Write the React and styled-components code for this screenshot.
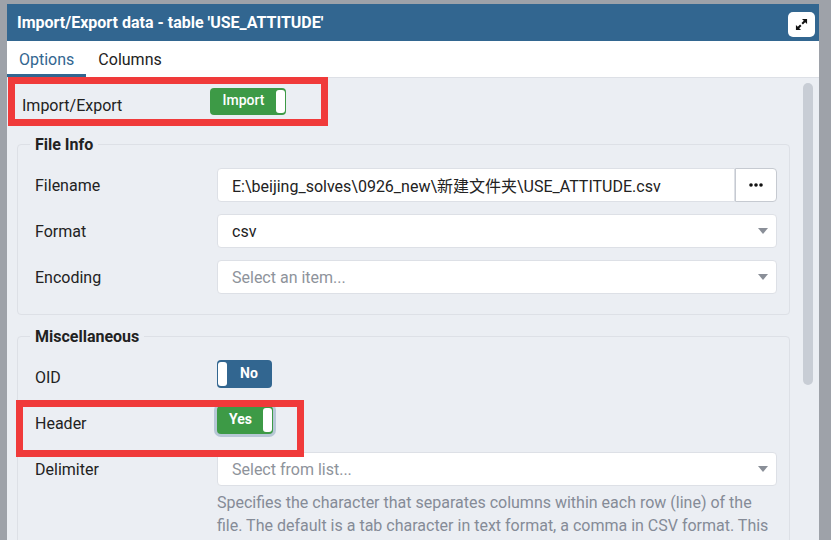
import styled, { createGlobalStyle } from "styled-components";

const GlobalStyle = createGlobalStyle`
  html, body {
    margin: 0;
    padding: 0;
    background: #9ea2a9;
  }
  body {
    font-family: Roboto, "Noto Sans CJK SC", sans-serif;
    color: #222;
  }
`;

const Page = styled.div`
  position: relative;
  width: 831px;
  height: 540px;
  overflow: hidden;
  box-sizing: border-box;
  padding: 4px 12px 0 7px;
  display: flex;
`;

const Dialog = styled.div`
  flex: 1;
  display: flex;
  flex-direction: column;
  background: #ebeef3;
`;

const TitleBar = styled.div`
  height: 37px;
  flex: none;
  background: #326690;
  display: flex;
  align-items: center;
  justify-content: space-between;
  padding: 0 4px 0 10px;
`;

const Title = styled.div`
  color: #fff;
  font-size: 16px;
  font-weight: 700;
`;

const ExpandButton = styled.div`
  width: 27px;
  height: 25px;
  margin-top: 4px;
  background: #fff;
  border-radius: 5px;
  display: flex;
  align-items: center;
  justify-content: center;
`;

const Tabs = styled.div`
  height: 36px;
  flex: none;
  background: #fff;
  border-bottom: 1px solid #dde0e6;
  display: flex;
`;

const Tab = styled.div`
  padding: 3px 12px 0;
  display: flex;
  align-items: center;
  font-size: 16px;
  color: ${(p) => (p.$active ? "#326690" : "#222")};
  border-bottom: 3px solid ${(p) => (p.$active ? "#326690" : "transparent")};
`;

const Body = styled.div`
  flex: 1;
  min-height: 0;
  display: flex;
`;

const Content = styled.div`
  flex: 1;
  padding: 10px 10px 0;
  overflow: hidden;
`;

const Scrollbar = styled.div`
  width: 19px;
  box-sizing: border-box;
  padding: 5px 6px 0 3px;
`;

const Thumb = styled.div`
  height: 302px;
  border-radius: 5px;
  background: #c8cdd5;
`;

const TopRow = styled.div`
  display: grid;
  grid-template-columns: 188px 1fr;
  align-items: start;
  padding-left: 5px;
`;

const Section = styled.fieldset`
  margin: ${(p) => p.$mt}px 0 0;
  border: 1px solid #dde0e6;
  border-radius: 4px;
  padding: 14px 12px 20px 17px;
  min-width: 0;
`;

const Legend = styled.legend`
  font-size: 16px;
  font-weight: 700;
  line-height: 19px;
  padding: 0 5px;
  margin-left: -5px;
`;

const Grid = styled.div`
  display: grid;
  grid-template-columns: 182px 1fr;
  row-gap: 12px;
  align-items: start;
`;

const Label = styled.div`
  height: 34px;
  display: flex;
  align-items: center;
  font-size: 16px;
`;

const Field = styled.div`
  display: flex;
  flex-direction: column;
`;

const InputGroup = styled.div`
  display: flex;
  height: 34px;
`;

const Box = styled.div`
  flex: 1;
  background: #fff;
  border: 1px solid #dde0e6;
  border-radius: ${(p) => (p.$joined ? "4px 0 0 4px" : "4px")};
  padding: 0 8px 0 14px;
  display: flex;
  align-items: center;
  justify-content: space-between;
  font-size: 16px;
  color: ${(p) => (p.$placeholder ? "#8e939b" : "#222")};
  white-space: nowrap;
`;

const Caret = styled.span`
  width: 0;
  height: 0;
  border-left: 5px solid transparent;
  border-right: 5px solid transparent;
  border-top: 6px solid #8a8f98;
`;

const DotsButton = styled.div`
  width: 42px;
  box-sizing: border-box;
  background: #fff;
  border: 1px solid #c6cad1;
  border-radius: 0 4px 4px 0;
  display: flex;
  align-items: center;
  justify-content: center;
`;

const Switch = styled.div`
  width: ${(p) => p.$w}px;
  height: ${(p) => p.$h}px;
  box-sizing: border-box;
  border-radius: 4px;
  background: ${(p) => p.$color};
  padding: 2px 1px;
  display: flex;
  flex-direction: ${(p) => (p.$handleLeft ? "row" : "row-reverse")};
  box-shadow: ${(p) => (p.$focus ? "0 0 0 3px rgba(120, 150, 180, 0.45)" : "none")};
`;

const SwitchText = styled.span`
  flex: 1;
  display: flex;
  align-items: center;
  justify-content: center;
  padding-bottom: 3px;
  color: #fff;
  font-size: 14px;
  font-weight: ${(p) => (p.$bold ? 700 : 500)};
`;

const Handle = styled.span`
  width: 9px;
  background: #fff;
  border-radius: 3px;
`;

const Help = styled.div`
  margin-top: 5px;
  font-size: 16px;
  line-height: 23px;
  color: #858b97;
`;

const Highlight = styled.div`
  position: absolute;
  left: ${(p) => p.$x}px;
  top: ${(p) => p.$y}px;
  width: ${(p) => p.$w}px;
  height: ${(p) => p.$h}px;
  box-sizing: border-box;
  border: 7px solid #f03a3a;
  pointer-events: none;
`;

function ExpandIcon() {
  return (
    <svg width="13" height="13" viewBox="0 0 14 14">
      <polygon points="13,1 13,6.5 11,4.5 8.5,7 7,5.5 9.5,3 7.5,1" fill="#111" />
      <polygon points="1,13 1,7.5 3,9.5 5.5,7 7,8.5 4.5,11 6.5,13" fill="#111" />
    </svg>
  );
}

function Dots() {
  return (
    <svg width="14" height="4" viewBox="0 0 14 4">
      <circle cx="2" cy="2" r="1.8" fill="#111" />
      <circle cx="7" cy="2" r="1.8" fill="#111" />
      <circle cx="12" cy="2" r="1.8" fill="#111" />
    </svg>
  );
}

function Select({ value, placeholder }) {
  return (
    <InputGroup>
      <Box $placeholder={!value}>
        <span>{value || placeholder}</span>
        <Caret />
      </Box>
    </InputGroup>
  );
}

export default function App() {
  return (
    <>
      <GlobalStyle />
      <Page>
        <Dialog>
          <TitleBar>
            <Title>Import/Export data - table 'USE_ATTITUDE'</Title>
            <ExpandButton>
              <ExpandIcon />
            </ExpandButton>
          </TitleBar>
          <Tabs>
            <Tab $active>Options</Tab>
            <Tab>Columns</Tab>
          </Tabs>
          <Body>
            <Content>
              <TopRow>
                <Label>Import/Export</Label>
                <Switch $w={76} $h={27} $color="#3d9a46">
                  <Handle />
                  <SwitchText>Import</SwitchText>
                </Switch>
              </TopRow>

              <Section $mt={13}>
                <Legend>File Info</Legend>
                <Grid>
                  <Label>Filename</Label>
                  <InputGroup>
                    <Box $joined>E:\beijing_solves\0926_new\新建文件夹\USE_ATTITUDE.csv</Box>
                    <DotsButton>
                      <Dots />
                    </DotsButton>
                  </InputGroup>
                  <Label>Format</Label>
                  <Select value="csv" />
                  <Label>Encoding</Label>
                  <Select placeholder="Select an item..." />
                </Grid>
              </Section>

              <Section $mt={12}>
                <Legend>Miscellaneous</Legend>
                <Grid>
                  <Label>OID</Label>
                  <Switch $w={55} $h={28} $color="#326690" $handleLeft>
                    <Handle />
                    <SwitchText $bold>No</SwitchText>
                  </Switch>
                  <Label>Header</Label>
                  <Switch $w={56} $h={28} $color="#3d9a46" $focus>
                    <Handle />
                    <SwitchText $bold>Yes</SwitchText>
                  </Switch>
                  <Label>Delimiter</Label>
                  <Field>
                    <Select placeholder="Select from list..." />
                    <Help>
                      Specifies the character that separates columns within each row (line) of the
                      file. The default is a tab character in text format, a comma in CSV format. This
                    </Help>
                  </Field>
                </Grid>
              </Section>
            </Content>
            <Scrollbar>
              <Thumb />
            </Scrollbar>
          </Body>
        </Dialog>
        <Highlight $x={8} $y={77} $w={320} $h={49} />
        <Highlight $x={16} $y={400} $w={288} $h={57} />
      </Page>
    </>
  );
}
